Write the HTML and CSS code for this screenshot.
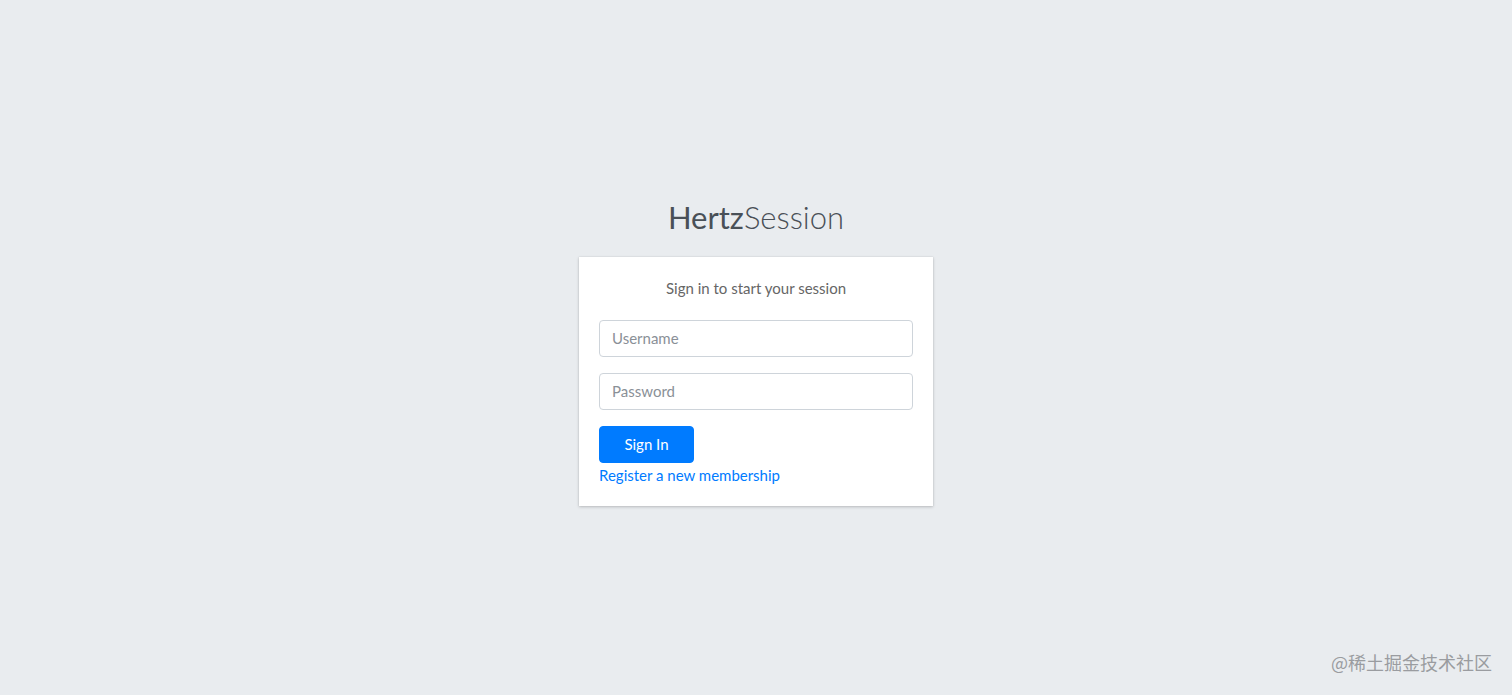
FILE: index.html
```html
<!DOCTYPE html>
<html lang="en">
<head>
    <meta charset="UTF-8">
    <meta name="viewport" content="width=device-width, initial-scale=1.0">
    <title>HertzSession | Log in</title>
    <link rel="stylesheet" href="styles.css">
</head>
<body class="login-page">
    <div class="login-box">
        <div class="login-logo">
            <a href="#"><b>Hertz</b>Session</a>
        </div>
        <div class="card">
            <div class="card-body">
                <p class="login-box-msg">Sign in to start your session</p>
                <form action="">
                    <div class="input-group">
                        <input type="text" class="form-control" name="username" placeholder="Username">
                    </div>
                    <div class="input-group">
                        <input type="password" class="form-control" name="password" placeholder="Password">
                    </div>
                    <button type="button" class="btn btn-primary">Sign In</button>
                </form>
                <a href="#" class="text-center">Register a new membership</a>
            </div>
        </div>
    </div>
    <div class="watermark">@稀土掘金技术社区</div>
</body>
</html>
```

FILE: styles.css
```css
* {
    box-sizing: border-box;
}
html, body {
    margin: 0;
    height: 100%;
}
body {
    background: #e9ecef;
    font-family: Lato, "Liberation Sans", sans-serif;
    color: #495057;
}
.login-page {
    display: flex;
    flex-direction: column;
    align-items: center;
    justify-content: center;
    padding-top: 9px;
}
.login-box {
    width: 354px;
}
.login-logo {
    text-align: center;
    font-size: 31px;
    font-weight: 300;
    margin-bottom: 21px;
    line-height: 37px;
}
.login-logo a {
    color: #495057;
    text-decoration: none;
}
.login-logo b {
    font-weight: 400;
}
.card {
    background: #fff;
    box-shadow: 0 0 1px rgba(0,0,0,.125), 0 1px 3px rgba(0,0,0,.2);
}
.card-body {
    padding: 20px 20px 19px;
}
.login-box-msg {
    margin: 0;
    text-align: center;
    font-size: 15px;
    color: #666;
    padding: 0 0 21px;
    line-height: 22px;
}
.input-group {
    margin-bottom: 16px;
}
.form-control {
    display: block;
    width: 100%;
    height: 37px;
    padding: 6px 12px;
    font-family: inherit;
    font-size: 15px;
    color: #495057;
    border: 1px solid #ced4da;
    border-radius: 4px;
    outline: none;
}
.form-control::placeholder {
    color: #8a9097;
}
.btn {
    display: block;
    width: 95px;
    height: 37px;
    border: 1px solid #007bff;
    border-radius: 4px;
    background: #007bff;
    color: #fff;
    font-family: inherit;
    font-size: 15px;
}
.text-center {
    display: inline-block;
    color: #007bff;
    text-decoration: none;
    font-size: 15px;
    line-height: 24px;
}
.watermark {
    position: absolute;
    right: 20px;
    bottom: 20px;
    font-size: 18px;
    color: #9a9ca0;
    font-family: "Noto Sans CJK SC", sans-serif;
}
```
